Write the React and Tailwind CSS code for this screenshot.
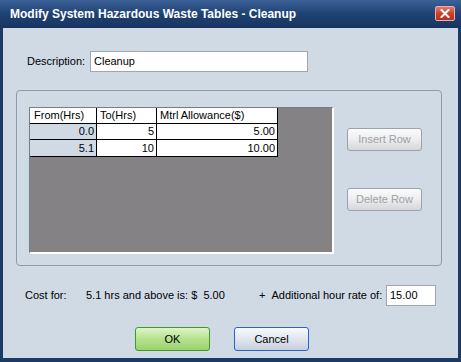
import React from 'react';

const rows = [
  { from: '0.0', to: '5', amt: '5.00' },
  { from: '5.1', to: '10', amt: '10.00' },
];

const GrayButton = ({ children }) => (
  <div className="w-[75px] h-[23px] flex items-center justify-center rounded-[3px] border border-[#9aa3ad] bg-gradient-to-b from-[#fbfbfb] via-[#eceef0] to-[#d4d7db] text-[#a0a0a0]">
    {children}
  </div>
);

export default function App() {
  return (
    <div
      className="w-[461px] h-[362px] flex flex-col bg-[#1c3a66] text-[11px] text-black"
      style={{ fontFamily: '"Liberation Sans", Arial, sans-serif' }}
    >
      {/* title bar */}
      <div className="h-[28px] shrink-0 flex items-center justify-between pl-[10px] pr-[6px] bg-gradient-to-b from-[#3d6298] via-[#1f4274] to-[#18355f]">
        <span className="text-white font-bold text-[12px]">
          Modify System Hazardous Waste Tables - Cleanup
        </span>
        <div className="w-[20px] h-[15px] mb-[1px] flex items-center justify-center rounded-[2px] border border-[#e8b0a8] bg-gradient-to-b from-[#e47a68] via-[#cc3f2c] to-[#b8301f]">
          <svg width="10" height="9" viewBox="0 0 10 9">
            <path d="M1.5 1 L8.5 8 M8.5 1 L1.5 8" stroke="#fff" strokeWidth="2" strokeLinecap="square" />
          </svg>
        </div>
      </div>

      {/* client area */}
      <div className="flex-1 ml-[3px] mr-[3px] mb-[4px] bg-[#cfdae5] flex flex-col">
        <div className="flex items-center mt-[23px] pl-[24px]">
          <span className="w-[63px]">Description:</span>
          <div className="w-[218px] h-[21px] bg-white border border-[#a0a6ad] flex items-center pl-[3px]">
            Cleanup
          </div>
        </div>

        {/* group box */}
        <div className="mt-[18px] ml-[13px] w-[426px] h-[176px] border border-[#8c9cad] rounded-[4px] flex">
          <div className="mt-[16px] ml-[12px] w-[305px] h-[147px] bg-[#858286] border-l border-t border-l-[#6e7f90] border-t-[#6e7f90] border-r-2 border-b-2 border-r-white border-b-white">
            <div className="grid grid-cols-[67px_60px_120px] w-[248px] border-b border-r border-black">
              <div className="h-[16px] bg-white border-r border-b border-black pl-[4px] flex items-center">From(Hrs)</div>
              <div className="h-[16px] bg-white border-r border-b border-black pl-[3px] flex items-center">To(Hrs)</div>
              <div className="h-[16px] bg-white border-b border-black pl-[3px] flex items-center">Mtrl Allowance($)</div>
              {rows.map((r, i) => (
                <React.Fragment key={i}>
                  <div className={`h-[16px] bg-[#cfdae5] border-r border-black flex items-center justify-end pr-[2px] ${i === 0 ? 'border-b' : ''}`}>{r.from}</div>
                  <div className={`h-[16px] bg-white border-r border-black flex items-center justify-end pr-[2px] ${i === 0 ? 'border-b' : ''}`}>{r.to}</div>
                  <div className={`h-[16px] bg-white border-black flex items-center justify-end pr-[2px] ${i === 0 ? 'border-b' : ''}`}>{r.amt}</div>
                </React.Fragment>
              ))}
            </div>
          </div>
          <div className="ml-[13px] mt-[37px] flex flex-col gap-[37px]">
            <GrayButton>Insert Row</GrayButton>
            <GrayButton>Delete Row</GrayButton>
          </div>
        </div>

        {/* cost row */}
        <div className="flex items-center mt-[19px] pl-[22px]">
          <span className="w-[61px]">Cost for:</span>
          <span className="w-[173px]">5.1 hrs and above is: $&nbsp;&nbsp;5.00</span>
          <span className="w-[127px]">+&nbsp;&nbsp;Additional hour rate of:</span>
          <div className="w-[50px] h-[21px] bg-white border border-[#a0a6ad] flex items-center pl-[3px]">15.00</div>
        </div>

        {/* dialog buttons */}
        <div className="flex mt-[21px] pl-[132px] gap-[24px]">
          <div className="w-[75px] h-[24px] flex items-center justify-center rounded-[3px] border border-[#3d9a2c] bg-gradient-to-b from-[#dff4c9] via-[#b5e28e] to-[#9dd16f]">
            OK
          </div>
          <div className="w-[75px] h-[24px] flex items-center justify-center rounded-[3px] border border-[#2c5fd4] bg-gradient-to-b from-[#f8fafd] via-[#e0e6ee] to-[#c5cfdc]">
            Cancel
          </div>
        </div>
      </div>
    </div>
  );
}
